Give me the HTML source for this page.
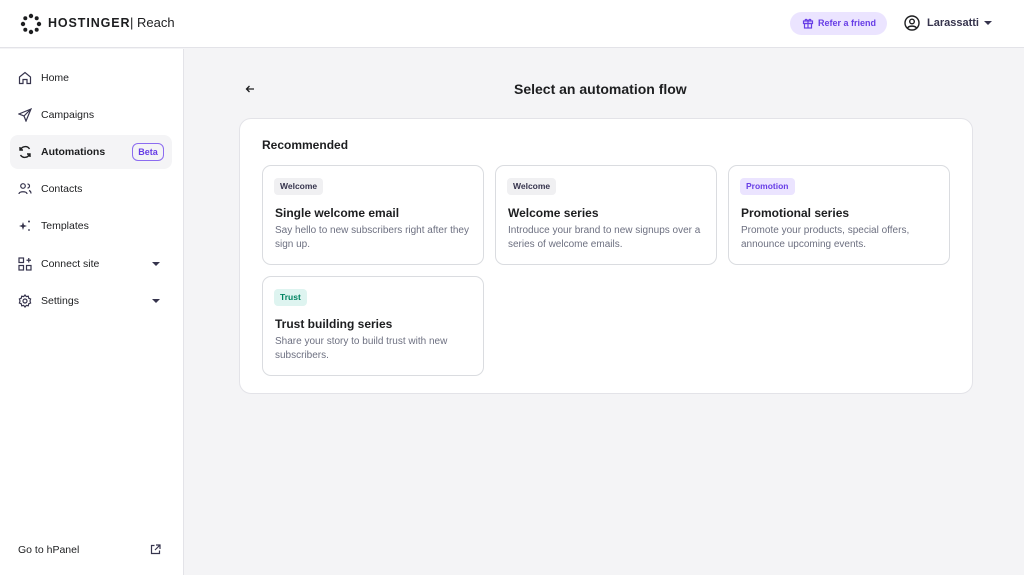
<!DOCTYPE html><html><head><style>
*{box-sizing:border-box;margin:0;padding:0}
body{width:1024px;height:575px;overflow:hidden;font-family:"Liberation Sans",sans-serif;background:#f4f4f6;color:#2f1c6a;position:relative}
.hdr{position:absolute;left:0;top:0;width:1024px;height:48px;background:#fff;border-bottom:1px solid #e3e3e8}
.side{position:absolute;left:0;top:49px;width:184px;height:526px;background:#fff;border-right:1px solid #e3e3e8}
.nav{position:absolute;left:10px;width:162px;height:34px;display:flex;align-items:center;font-size:10.5px;color:#1d1e20}
.nav svg{position:absolute;left:8px}
.nav span{position:absolute;left:31px}
.card{position:absolute;left:239px;top:118px;width:734px;height:276px;background:#fff;border:1px solid #e3e3e8;border-radius:12px}
.it{position:absolute;width:222px;height:100px;border:1px solid #dadce0;border-radius:9px;background:#fff}
.tag{position:absolute;left:11px;top:12px;height:17px;padding:0 6px;border-radius:4px;background:#f0f0f2;font-size:8.5px;font-weight:bold;line-height:17px;color:#36344d}
.it h3{position:absolute;left:12px;top:40px;font-size:12px;color:#1d1e20}
.it p{position:absolute;left:12px;top:58px;width:208px;font-size:10px;line-height:14px;color:#6d7081}
.caret{position:absolute;width:0;height:0;border-left:4px solid transparent;border-right:4px solid transparent;border-top:4px solid #36344d}
</style></head><body>
<div class="hdr">
<svg style="position:absolute;left:20px;top:13px" width="22" height="22" viewBox="0 0 22 22" fill="#1d1e20"><circle cx="11" cy="3" r="2.2"/><circle cx="11" cy="19" r="2.2"/><circle cx="3" cy="11" r="2.2"/><circle cx="19" cy="11" r="2.2"/><circle cx="5.3" cy="5.3" r="2"/><circle cx="16.7" cy="16.7" r="2"/><circle cx="16.7" cy="5.3" r="2"/><circle cx="5.3" cy="16.7" r="2"/></svg>
<div style="position:absolute;left:48px;top:16px;font-size:12.5px;font-weight:bold;letter-spacing:0.9px;color:#1d1e20">HOSTINGER</div>
<div style="position:absolute;left:130px;top:15px;font-size:13px;color:#1d1e20">|&nbsp;Reach</div>
<div style="position:absolute;left:790px;top:12px;width:97px;height:23px;border-radius:12px;background:#ebe4ff;font-size:9px;font-weight:bold;color:#673de6;line-height:23px;padding-left:28px">Refer a friend</div>
<svg style="position:absolute;left:802px;top:17px" width="12" height="12" viewBox="0 0 12 12" fill="none" stroke="#673de6" stroke-width="1.2"><rect x="1.5" y="4" width="9" height="2.5"/><rect x="2.5" y="6.5" width="7" height="4.5"/><path d="M6 4v7M6 4C4 1 2 3 4 4M6 4c2-3 4-1 2 0"/></svg>
<svg style="position:absolute;left:904px;top:15px" width="16" height="16" viewBox="0 0 16 16" fill="none" stroke="#1d1e20" stroke-width="1.4"><circle cx="8" cy="8" r="7"/><circle cx="8" cy="6.5" r="2.3"/><path d="M3.5 13c1.5-2.5 7.5-2.5 9 0"/></svg>
<div style="position:absolute;left:927px;top:17px;font-size:11px;font-weight:bold;color:#36344d">Larassatti</div>
<div class="caret" style="left:984px;top:21px"></div>
</div>
<div class="side">
<div class="nav" style="top:12px"><svg width="14" height="14" viewBox="0 0 14 14" fill="none" stroke="#36344d" stroke-width="1.2"><path d="M1.5 6L7 1.5 12.5 6v6.5h-3.5v-4h-4v4H1.5z"/></svg><span>Home</span></div>
<div class="nav" style="top:49px"><svg width="14" height="14" viewBox="0 0 14 14" fill="none" stroke="#36344d" stroke-width="1.2"><path d="M13 1L1 6l5 2 2 5z M6 8l7-7"/></svg><span>Campaigns</span></div>
<div class="nav" style="top:86px;background:#f4f4f6;border-radius:8px;font-weight:bold"><svg width="14" height="14" viewBox="0 0 14 14" fill="none" stroke="#1d1e20" stroke-width="1.4"><path d="M11.5 4A5 5 0 0 0 2.5 5M2.5 10a5 5 0 0 0 9-1M2 2v3h3M12 12V9H9"/></svg><span>Automations</span><div style="position:absolute;left:122px;top:8px;width:32px;height:18px;border:1px solid #8c6cf0;border-radius:6px;color:#673de6;font-size:9px;text-align:center;line-height:16px">Beta</div></div>
<div class="nav" style="top:123px"><svg width="14" height="14" viewBox="0 0 14 14" fill="none" stroke="#36344d" stroke-width="1.2"><circle cx="5" cy="4" r="2.3"/><path d="M1 12c0-3 8-3 8 0M9.5 2a2 2 0 0 1 0 4M11 8.5c1.5.5 2 1.5 2 3"/></svg><span>Contacts</span></div>
<div class="nav" style="top:160px"><svg width="14" height="14" viewBox="0 0 14 14" fill="#36344d"><path d="M5 3l1 3 3 1-3 1-1 3-1-3-3-1 3-1z"/><circle cx="11" cy="2.5" r="1"/><circle cx="11" cy="11" r="0.9"/></svg><span>Templates</span></div>
<div class="nav" style="top:198px"><svg width="14" height="14" viewBox="0 0 14 14" fill="none" stroke="#36344d" stroke-width="1.2"><rect x="1" y="1" width="4.5" height="4.5"/><rect x="1" y="8.5" width="4.5" height="4.5"/><rect x="8.5" y="8.5" width="4.5" height="4.5"/><path d="M10.75 1v4.5M8.5 3.25H13"/></svg><span>Connect site</span><div class="caret" style="left:142px;top:15px"></div></div>
<div class="nav" style="top:235px"><svg width="14" height="14" viewBox="0 0 14 14" fill="none" stroke="#36344d" stroke-width="1.2"><circle cx="7" cy="7" r="2"/><path d="M7 1l1.3 1.6 2-.4.4 2L12.6 5 12 7l.6 2-1.9.8-.4 2-2-.4L7 13l-1.3-1.6-2 .4-.4-2L1.4 9 2 7l-.6-2 1.9-.8.4-2 2 .4z"/></svg><span>Settings</span><div class="caret" style="left:142px;top:15px"></div></div>
<div style="position:absolute;left:18px;top:495px;font-size:10.5px;color:#1d1e20">Go to hPanel</div>
<svg style="position:absolute;left:150px;top:495px" width="11" height="11" viewBox="0 0 11 11" fill="none" stroke="#36344d" stroke-width="1.2"><path d="M4.5 1.5H1.5v8h8V6.5M6 1h4v4M10 1L5 6"/></svg>
</div>
<svg style="position:absolute;left:245px;top:84px" width="10" height="10" viewBox="0 0 10 10" fill="none" stroke="#1d1e20" stroke-width="1.3"><path d="M9 5H1.5M4.5 2L1.5 5l3 3"/></svg>
<div style="position:absolute;left:514px;top:81px;font-size:14px;font-weight:bold;color:#1d1e20">Select an automation flow</div>
<div class="card">
<div style="position:absolute;left:22px;top:19px;font-size:12px;font-weight:bold;color:#1d1e20">Recommended</div>
<div class="it" style="left:22px;top:46px"><div class="tag">Welcome</div><h3>Single welcome email</h3><p>Say hello to new subscribers right after they sign up.</p></div>
<div class="it" style="left:255px;top:46px"><div class="tag">Welcome</div><h3>Welcome series</h3><p>Introduce your brand to new signups over a series of welcome emails.</p></div>
<div class="it" style="left:488px;top:46px"><div class="tag" style="background:#ebe4ff;color:#673de6">Promotion</div><h3>Promotional series</h3><p>Promote your products, special offers, announce upcoming events.</p></div>
<div class="it" style="left:22px;top:157px"><div class="tag" style="background:#def4f0;color:#008361">Trust</div><h3>Trust building series</h3><p>Share your story to build trust with new subscribers.</p></div>
</div>
</body></html>
